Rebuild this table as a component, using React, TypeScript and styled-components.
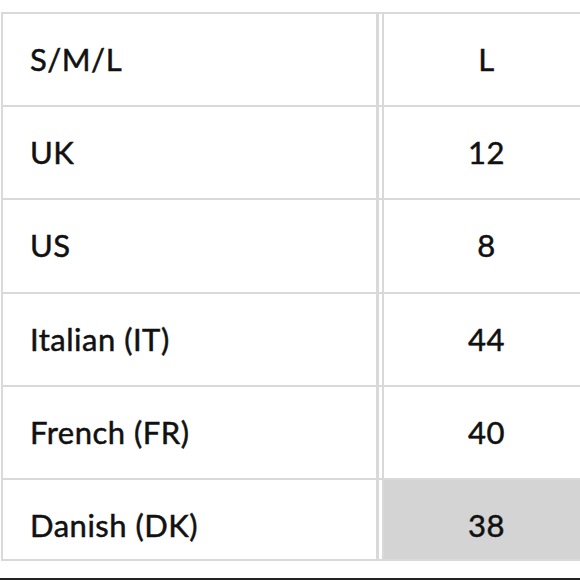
import React from "react";
import styled, { createGlobalStyle } from "styled-components";

const Global = createGlobalStyle`
  html, body { margin: 0; padding: 0; background: #ffffff; }
  body { width: 580px; height: 580px; overflow: hidden; font-family: Lato, "Noto Sans", sans-serif; }
`;

const Page = styled.div`
  width: 580px;
  height: 580px;
  display: flex;
  flex-direction: column;
  overflow: hidden;
`;

const Table = styled.div`
  margin: 12px 0 0 1px;
  width: 586px;
  border-top: 2px solid #d9d9d9;
  border-left: 2px solid #d9d9d9;
  display: flex;
  flex-direction: column;
`;

const Row = styled.div<{ $h: number }>`
  display: grid;
  grid-template-columns: 376px 3px 1fr;
  height: ${(p) => p.$h}px;
  border-bottom: 2px solid #d9d9d9;
  box-sizing: content-box;
  overflow: hidden;
`;

const Cell = styled.div`
  font-size: 31px;
  font-weight: 400;
  letter-spacing: 0.5px;
  -webkit-text-stroke: 0.5px #111;
  color: #111;
  line-height: 32px;
  padding-top: 29px;
`;

const Label = styled(Cell)`
  border-right: 3px solid #d9d9d9;
  padding-left: 27px;
`;

const Gap = styled.div``;

const Value = styled(Cell)<{ $hl?: boolean }>`
  border-left: 2px solid #d9d9d9;
  background: ${(p) => (p.$hl ? "#d4d4d4" : "#ffffff")};
  text-align: center;
`;

const Spacer = styled.div`
  flex: 1;
`;

const BottomRule = styled.div`
  height: 2px;
  background: #222;
`;

const rows: { label: string; value: string; h: number; hl?: boolean }[] = [
  { label: "S/M/L", value: "L", h: 91 },
  { label: "UK", value: "12", h: 91 },
  { label: "US", value: "8", h: 92 },
  { label: "Italian (IT)", value: "44", h: 91 },
  { label: "French (FR)", value: "40", h: 91 },
  { label: "Danish (DK)", value: "38", h: 79, hl: true },
];

export default function App() {
  return (
    <Page>
      <Global />
      <Table>
        {rows.map((r) => (
          <Row key={r.label} $h={r.h}>
            <Label>{r.label}</Label>
            <Gap />
            <Value $hl={r.hl}>{r.value}</Value>
          </Row>
        ))}
      </Table>
      <Spacer />
      <BottomRule />
    </Page>
  );
}
